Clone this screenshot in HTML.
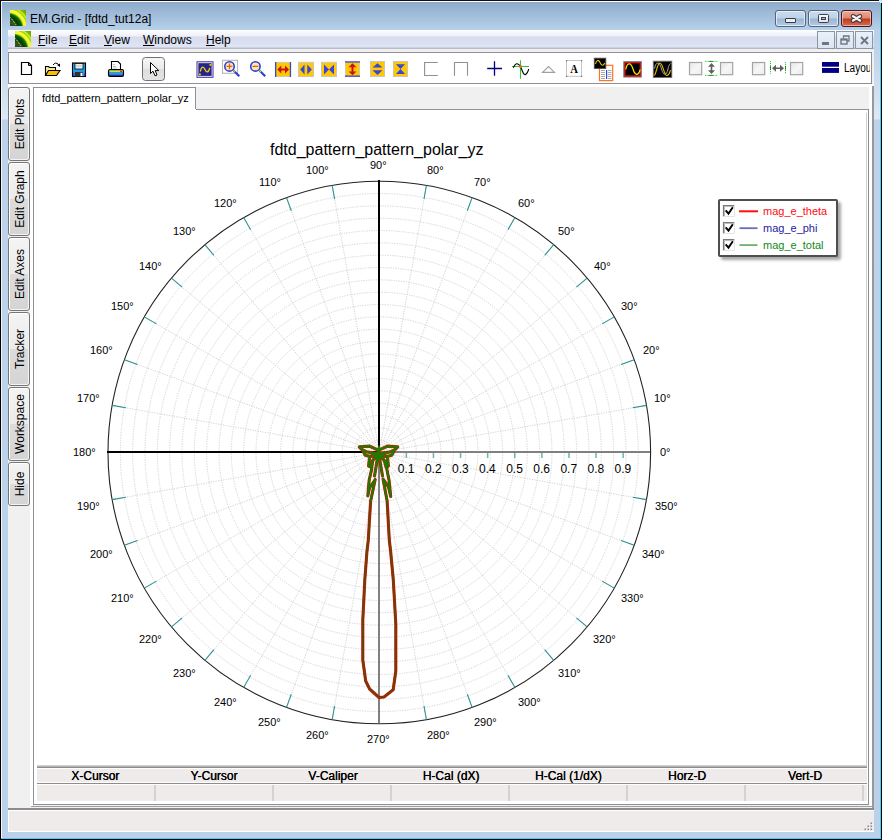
<!DOCTYPE html>
<html><head><meta charset="utf-8">
<style>
*{margin:0;padding:0;box-sizing:border-box}
html,body{width:882px;height:840px;overflow:hidden}
body{position:relative;background:#b9d1ea;font-family:"Liberation Sans",sans-serif;color:#000}
.a{position:absolute}
.t{position:absolute;white-space:nowrap;line-height:1}
</style></head><body>
<!-- frame -->
<div class="a" style="left:0;top:0;width:882px;height:840px;background:linear-gradient(#b9d1ea 0,#b9d1ea 40px,#dce8f5 119px,#bcd3eb 120px,#b9d1ea 100%)"></div>
<div class="a" style="left:0;top:0;width:2px;height:840px;background:#000"></div>
<div class="a" style="left:1px;top:1px;width:1px;height:838px;background:#f4f8fc"></div>
<div class="a" style="left:881px;top:2px;width:1px;height:838px;background:#000"></div>
<div class="a" style="left:878px;top:0;width:4px;height:3px;background:#e8eef4;border-radius:0 3px 0 0"></div>
<div class="a" style="left:880px;top:3px;width:1px;height:836px;background:#3ad4f8"></div>
<div class="a" style="left:0;top:839px;width:882px;height:1px;background:#000"></div>
<div class="a" style="left:1px;top:838px;width:880px;height:1px;background:#3ad4f8"></div>
<div class="a" style="left:0;top:0;width:879px;height:1px;background:#111;border-radius:0 0 0 0"></div>
<div class="a" style="left:2px;top:1px;width:877px;height:1px;background:#fbfdff"></div>
<div class="a" style="left:2px;top:2px;width:878px;height:28px;background:linear-gradient(#8eabcb,#b6d1ea)"></div>
<!-- title -->
<!--TICON-->
<svg class="a" style="left:10px;top:10px" width="16" height="16" viewBox="0 0 16 16">
<defs><radialGradient id="rga" cx="-2" cy="18" r="24" gradientUnits="userSpaceOnUse">
<stop offset="0" stop-color="#4a6a10"/><stop offset="0.3" stop-color="#2e5a0a"/><stop offset="0.45" stop-color="#053c02"/><stop offset="0.58" stop-color="#0a6a08"/><stop offset="0.66" stop-color="#f0f820"/><stop offset="0.76" stop-color="#f8fa40"/><stop offset="0.8" stop-color="#98d010"/><stop offset="0.86" stop-color="#d0ee28"/><stop offset="0.92" stop-color="#80b800"/><stop offset="1" stop-color="#70a800"/></radialGradient></defs>
<rect width="16" height="16" fill="url(#rga)"/>
<path d="M0.5,7.5 L6.5,15.5" stroke="#f0f0f0" stroke-width="1" stroke-dasharray="1 1"/>
<rect x="0" y="14" width="3" height="2" fill="#404040"/>
</svg>
<!--/TICON-->
<div class="t" style="left:30px;top:13px;font-size:12px;color:#000">EM.Grid - [fdtd_tut12a]</div>
<!-- window buttons -->
<!--WBTNS-->
<div class="a" style="left:775px;top:10px;width:31px;height:17px;border:1px solid #55647a;border-radius:3px;background:linear-gradient(#cadcef 0,#bdd2e8 7px,#9ab6d3 8px,#b3cbe4 15px);box-shadow:inset 0 0 0 1px rgba(240,246,252,.75)"></div>
<div class="a" style="left:785px;top:18px;width:11px;height:5px;border:1px solid #333a48;border-radius:1px;background:#efefef"></div>
<div class="a" style="left:808px;top:10px;width:31px;height:17px;border:1px solid #55647a;border-radius:3px;background:linear-gradient(#cadcef 0,#bdd2e8 7px,#9ab6d3 8px,#b3cbe4 15px);box-shadow:inset 0 0 0 1px rgba(240,246,252,.75)"></div>
<div class="a" style="left:818px;top:14px;width:11px;height:9px;border:1px solid #3a4050;border-radius:1.5px;background:linear-gradient(#fafafa,#e4e4e4)"></div>
<div class="a" style="left:821px;top:17px;width:5px;height:3px;border:1px solid #3a4050;background:#a8bcd4"></div>
<div class="a" style="left:841px;top:10px;width:31px;height:17px;border:1px solid #4a1222;border-radius:3px;background:linear-gradient(#eba996 0,#de8a72 7px,#c03c1c 8px,#d46c52 15px);box-shadow:inset 0 0 0 1px rgba(250,220,210,.6)"></div>
<svg class="a" style="left:850px;top:13px" width="13" height="11" viewBox="0 0 13 11"><path d="M3,3.2 L10,7.6 M10,3.2 L3,7.6" stroke="#3b3040" stroke-width="4.4" stroke-linecap="round"/><path d="M3,3.2 L10,7.6 M10,3.2 L3,7.6" stroke="#f2f2f2" stroke-width="2.4" stroke-linecap="round"/></svg>

<!--/WBTNS-->
<!-- menu bar -->
<div class="a" style="left:8px;top:30px;width:866px;height:19px;background:linear-gradient(#ffffff 0,#eef0f8 6px,#d6dcee 7px,#e0e5f4 17px,#b8bccc 18px)"></div>
<!--MICON-->
<svg class="a" style="left:15px;top:31px" width="16" height="16" viewBox="0 0 16 16">
<defs><radialGradient id="rgb" cx="-2" cy="18" r="24" gradientUnits="userSpaceOnUse">
<stop offset="0" stop-color="#4a6a10"/><stop offset="0.3" stop-color="#2e5a0a"/><stop offset="0.45" stop-color="#053c02"/><stop offset="0.58" stop-color="#0a6a08"/><stop offset="0.66" stop-color="#f0f820"/><stop offset="0.76" stop-color="#f8fa40"/><stop offset="0.8" stop-color="#98d010"/><stop offset="0.86" stop-color="#d0ee28"/><stop offset="0.92" stop-color="#80b800"/><stop offset="1" stop-color="#70a800"/></radialGradient></defs>
<rect width="16" height="16" fill="url(#rgb)"/>
<path d="M0.5,7.5 L6.5,15.5" stroke="#f0f0f0" stroke-width="1" stroke-dasharray="1 1"/>
<rect x="0" y="14" width="3" height="2" fill="#404040"/>
</svg>
<!--/MICON-->
<div class="t" style="left:38px;top:34px;font-size:12px"><u>F</u>ile</div>
<div class="t" style="left:69px;top:34px;font-size:12px"><u>E</u>dit</div>
<div class="t" style="left:104px;top:34px;font-size:12px"><u>V</u>iew</div>
<div class="t" style="left:143px;top:34px;font-size:12px"><u>W</u>indows</div>
<div class="t" style="left:206px;top:34px;font-size:12px"><u>H</u>elp</div>
<!--MDI-->
<div class="a" style="left:817px;top:31px;width:18px;height:18px;border:1px solid #8c96a2;background:linear-gradient(#e9f1fa,#dbe6f3)"></div>
<div class="a" style="left:822px;top:42px;width:7px;height:3px;background:#6e7680"></div>
<div class="a" style="left:836px;top:31px;width:18px;height:18px;border:1px solid #8c96a2;background:linear-gradient(#e9f1fa,#dbe6f3)"></div>
<svg class="a" style="left:840px;top:35px" width="10" height="10" viewBox="0 0 10 10"><path d="M3.5,3 V1 H9 V6 H7" fill="none" stroke="#6e7680" stroke-width="1.3"/><rect x="1" y="4" width="6" height="5" fill="none" stroke="#6e7680" stroke-width="1.4"/><rect x="1" y="4" width="6" height="1.6" fill="#6e7680"/></svg>
<div class="a" style="left:855px;top:31px;width:18px;height:18px;border:1px solid #8c96a2;background:linear-gradient(#e9f1fa,#dbe6f3)"></div>
<svg class="a" style="left:860px;top:36px" width="9" height="9" viewBox="0 0 9 9"><path d="M1,1 L8,8 M8,1 L1,8" stroke="#6e7680" stroke-width="1.9"/></svg>

<!--/MDI-->
<!-- below menu grey -->
<div class="a" style="left:8px;top:49px;width:866px;height:760px;background:#f0f0f0"></div>
<!-- toolbar -->
<div class="a" style="left:8px;top:52px;width:864px;height:32px;background:#fff;border:1px solid #8e8f98"></div>
<div class="a" style="left:8px;top:84px;width:866px;height:3px;background:#fff"></div>
<!--TOOLS-->
<svg class="a" style="left:0;top:50px" width="882" height="36" viewBox="0 50 882 36">
<!-- new doc -->
<path d="M21.5,62.5 H28.5 L31.5,65.5 V74.5 H21.5 Z" fill="#fff" stroke="#000" stroke-width="1.2"/>
<path d="M28.5,62.5 V65.5 H31.5" fill="none" stroke="#000" stroke-width="1"/>
<!-- open folder -->
<path d="M45.5,75.5 V66.5 H48.5 L49.5,67.5 H55.5 V70.5" fill="#f8e8a0" stroke="#000" stroke-width="1.1"/>
<path d="M45.5,75.5 L48.5,70.5 H60 L56.5,75.5 Z" fill="#f8c000" stroke="#000" stroke-width="1.1"/>
<path d="M53,65 Q55.5,61.5 58.5,64.5" fill="none" stroke="#000" stroke-width="1"/>
<path d="M57,65 L60,67 L60,63.5 Z" fill="#000"/>
<!-- save -->
<rect x="72.5" y="63" width="13" height="13.5" fill="#18a0ee" stroke="#000" stroke-width="1.1"/>
<rect x="75" y="63.5" width="8" height="5.5" fill="#fff" stroke="#000" stroke-width="0.8"/>
<rect x="76" y="64.5" width="6" height="3" fill="#d8d8d8"/>
<rect x="75" y="72" width="8" height="4.5" fill="#303030"/>
<rect x="80.5" y="72.8" width="2" height="3.2" fill="#fff"/>
<rect x="73" y="73" width="1.5" height="3" fill="#4040c8"/><rect x="84" y="73" width="1.2" height="3" fill="#4040c8"/>
<!-- printer -->
<path d="M111.5,61.5 H118 L120.5,64 V69.5 H111.5 Z" fill="#fff" stroke="#000" stroke-width="1.1"/>
<path d="M113,64.5 H115 M113,66.5 H116 M113,68 H117" stroke="#999" stroke-width="0.6"/>
<rect x="108.5" y="69.5" width="15" height="7" rx="1.5" fill="#2030b0" stroke="#000" stroke-width="1.1"/>
<rect x="109.3" y="70.3" width="13.4" height="2" fill="#c8e828"/>
<rect x="109.3" y="72.3" width="13.4" height="1.5" fill="#20b8e8"/>
<rect x="109.3" y="73.8" width="13.4" height="1" fill="#6080e0"/>
<rect x="120" y="70.5" width="2" height="1.6" fill="#e83020"/>
<!-- pointer button -->
<rect x="142.5" y="57.5" width="22" height="23" rx="3" fill="url(#gbtn)" stroke="#707070" stroke-width="1"/>
<defs><linearGradient id="gbtn" x1="0" y1="0" x2="0" y2="1"><stop offset="0" stop-color="#f6f6f6"/><stop offset="0.5" stop-color="#eaeaea"/><stop offset="0.52" stop-color="#dedede"/><stop offset="1" stop-color="#e4e4e4"/></linearGradient>
<linearGradient id="gbox" x1="0" y1="0" x2="1" y2="1"><stop offset="0" stop-color="#e6e6e6"/><stop offset="0.5" stop-color="#f6f6f6"/><stop offset="1" stop-color="#ececec"/></linearGradient></defs>
<path d="M150.5,62.5 V73.5 L153,71.2 L155,75.8 L157,75 L155.2,70.6 L158.8,70.6 Z" fill="#fff" stroke="#000" stroke-width="1" stroke-linejoin="round"/>
<!-- scope blue -->
<rect x="196.5" y="61.3" width="17" height="16.5" fill="#2a2ad8"/>
<rect x="197.4" y="62.2" width="15.2" height="14.7" fill="#f0e2b4"/>
<rect x="198.4" y="63.2" width="13.2" height="12.7" fill="#24248c"/>
<path d="M200.3,71.5 C201.5,66 203.5,66 205,69.5 C206.5,73 208.5,73 209.7,67.8" fill="none" stroke="#f2d200" stroke-width="1.3"/>
<rect x="209.5" y="64" width="1.8" height="1.8" fill="#f2d200"/><rect x="199" y="73.5" width="1.8" height="1.8" fill="#f2d200"/>
<!-- zoom in -->
<rect x="222.5" y="60.3" width="15" height="13" fill="none" stroke="#b8b8b8" stroke-width="1.1"/>
<line x1="233.5" y1="70.5" x2="239.3" y2="76.3" stroke="#3040d0" stroke-width="2.2"/>
<line x1="233.5" y1="70.5" x2="235" y2="72" stroke="#a0e020" stroke-width="1.5"/>
<circle cx="229.5" cy="66.4" r="4.7" fill="#f6e8b8" stroke="#3040d0" stroke-width="1.6"/>
<path d="M226.6,66.4 H232.4 M229.5,63.5 V69.3" stroke="#f05a10" stroke-width="1.2"/>
<!-- zoom out -->
<line x1="259.5" y1="70.5" x2="265.2" y2="76.3" stroke="#3040d0" stroke-width="2.2"/>
<line x1="259.5" y1="70.5" x2="261" y2="72" stroke="#a0e020" stroke-width="1.5"/>
<circle cx="255.4" cy="66.4" r="4.7" fill="#f6e8b8" stroke="#3040d0" stroke-width="1.6"/>
<path d="M252.5,66.4 H258.3" stroke="#f05a10" stroke-width="1.3"/>
<!-- h arrow -->
<rect x="275.5" y="62.3" width="15" height="14.3" fill="#ffc800" stroke="#c4c4c4" stroke-width="0.8"/>
<rect x="275" y="62" width="1.3" height="15" fill="#3a46d8"/><rect x="289.8" y="62" width="1.3" height="15" fill="#3a46d8"/>
<path d="M277.3,69.5 L281.3,65.5 V68.5 H285 V65.5 L289,69.5 L285,73.5 V70.5 H281.3 V73.5 Z" fill="#c81414"/>
<!-- lr triangles -->
<rect x="298.5" y="62.3" width="15" height="14.3" fill="#ffc800" stroke="#c4c4c4" stroke-width="0.9"/>
<path d="M300.2,69.5 L304.5,64.5 V74.5 Z M311.8,69.5 L307.3,64.5 V74.5 Z" fill="#3a46d8"/>
<!-- bowtie -->
<rect x="321.5" y="62.3" width="15" height="14.3" fill="#ffc800" stroke="#c4c4c4" stroke-width="0.9"/>
<path d="M324,64.5 L329,69.5 L324,74.5 Z M334,64.5 L329,69.5 L334,74.5 Z" fill="#3a46d8"/>
<!-- v arrow -->
<rect x="345.5" y="62" width="14" height="14.5" fill="#ffc800" stroke="#c4c4c4" stroke-width="0.8"/>
<rect x="345" y="61.3" width="15" height="1.3" fill="#3a46d8"/><rect x="345" y="75.5" width="15" height="1.3" fill="#3a46d8"/>
<path d="M352.5,63.3 L356.5,67.3 H353.5 V71.5 H356.5 L352.5,75.3 L348.5,71.5 H351.5 V67.3 H348.5 Z" fill="#c81414"/>
<!-- ud triangles -->
<rect x="370.5" y="61.5" width="14" height="15" fill="#ffc800" stroke="#c4c4c4" stroke-width="0.9"/>
<path d="M377.5,63.2 L382.5,67.6 H372.5 Z M377.5,75 L382.5,70.2 H372.5 Z" fill="#3a46d8"/>
<!-- hourglass -->
<rect x="393.5" y="61.5" width="14" height="15" fill="#ffc800" stroke="#c4c4c4" stroke-width="0.9"/>
<path d="M396,64.2 H405 L400.5,69 Z M396,74 H405 L400.5,69 Z" fill="#3a46d8"/>
<!-- brackets -->
<path d="M437.8,62.5 H424.6 V75.5 H437.8" fill="none" stroke="#909090" stroke-width="1.1"/>
<path d="M454.5,75.8 V62.5 H467.5 V75.8" fill="none" stroke="#909090" stroke-width="1.1"/>
<!-- plus -->
<path d="M487.2,68.5 H502 M494.5,61.2 V75.8" stroke="#000080" stroke-width="1.3"/>
<!-- cursor sine -->
<path d="M520.5,60.2 V78.8 M512,66.5 H529" stroke="#30c040" stroke-width="1.1"/>
<path d="M513.3,67.8 C515,63.5 517.5,61.8 520.5,66.5 C522,70 523.5,75.5 525.5,74.5 C527.5,73.5 528.5,70 528.8,69" fill="none" stroke="#000" stroke-width="1.1"/>
<rect x="519.3" y="65.3" width="2.6" height="2.6" fill="#f07020"/>
<!-- triangle -->
<path d="M542.5,72.4 L548.5,66.5 L554.5,72.4 Z" fill="none" stroke="#a0a0a0" stroke-width="1.1"/>
<!-- A box -->
<rect x="566.5" y="60.5" width="15" height="15.8" fill="#fff" stroke="#c4c4c4" stroke-width="1"/><g fill="#707070"><rect x="566" y="60" width="1.2" height="1.2"/><rect x="581" y="60" width="1.2" height="1.2"/><rect x="566" y="75.8" width="1.2" height="1.2"/><rect x="581" y="75.8" width="1.2" height="1.2"/></g>
<text x="574" y="73.3" font-family="Liberation Serif" font-weight="bold" font-size="12.5" text-anchor="middle" fill="#000" transform="translate(574 0) scale(0.85 1) translate(-574 0)">A</text>
<!-- scope+doc -->
<rect x="599.5" y="65.3" width="13.2" height="15.3" fill="#fff" stroke="#ff7420" stroke-width="1.2"/>
<path d="M601,70.5 H605 M601,72.5 H605 M601,74.5 H605 M601,76.5 H605 M601,78.5 H605 M608,70.5 H611.5 M608,72.5 H611.5 M608,74.5 H611.5 M608,76.5 H611.5 M608,78.5 H611.5" stroke="#a8a8a8" stroke-width="1"/>
<rect x="606" y="70" width="1.2" height="9" fill="#3848d8"/>
<rect x="594.3" y="58.2" width="11.5" height="10.3" fill="#000" stroke="#505050" stroke-width="0.9"/>
<path d="M595.5,64 C596.5,59.5 598.5,59.5 600,62.5 C601.5,66 603.5,66 604.7,63" fill="none" stroke="#f0c800" stroke-width="1.1"/>
<!-- red scope -->
<rect x="623.3" y="61.2" width="18.5" height="16.3" fill="#6c6c6c"/>
<rect x="624.2" y="62.1" width="16.7" height="14.5" fill="#e01010"/>
<rect x="625.5" y="63.4" width="14.1" height="11.9" fill="#000"/>
<path d="M625.8,69.5 C627,62 631,62 633,69 C635,76 638.5,76 640.2,69.5" fill="none" stroke="#f8e800" stroke-width="1.2"/>
<!-- black scope 2 waves -->
<rect x="653.3" y="61.2" width="18.5" height="16.3" fill="#000" stroke="#707070" stroke-width="0.9"/>
<path d="M654.5,68.5 C656,61 659.5,61 661.5,69 C663.5,76 666.5,76 668,69 C669,64.5 670,63.5 671,63.5" fill="none" stroke="#a8a8a8" stroke-width="1"/>
<path d="M654.5,75.5 C656.5,72 657.5,63 660,63 C663,63 664,76 667,75.5 C669.5,75 670,71 670.5,70" fill="none" stroke="#f0c000" stroke-width="1.1"/>
<!-- grey boxes -->
<rect x="689.5" y="62.5" width="12.2" height="12.2" fill="url(#gbox)" stroke="#a4a4a4" stroke-width="1.2"/>
<rect x="720.5" y="62.5" width="12.2" height="12.2" fill="url(#gbox)" stroke="#a4a4a4" stroke-width="1.2"/>
<rect x="752.5" y="62.5" width="12.2" height="12.2" fill="url(#gbox)" stroke="#a4a4a4" stroke-width="1.2"/>
<rect x="790.5" y="62.5" width="12.2" height="12.2" fill="url(#gbox)" stroke="#a4a4a4" stroke-width="1.2"/>
<!-- v arrow green -->
<path d="M705,61.4 H718 M705,75.4 H718" stroke="#20e020" stroke-width="1" stroke-dasharray="1 0.6"/>
<path d="M709.5,61.4 H713.5 M709.5,75.4 H713.5" stroke="#000" stroke-width="1" stroke-dasharray="1 1"/>
<path d="M711.5,63 L715,66.8 H712.3 V70.2 H715 L711.5,74 L708,70.2 H710.7 V66.8 H708 Z" fill="#606060"/>
<!-- h arrow green -->
<path d="M770.5,61 V73.7 M785.5,62 V73.7" stroke="#20e020" stroke-width="1" stroke-dasharray="1.2 0.8"/>
<path d="M770.5,66.5 V70.5 M785.5,66.5 V70.5" stroke="#000" stroke-width="1" stroke-dasharray="1 1"/>
<path d="M772,68.3 L776,64.8 V67.5 H780 V64.8 L784,68.3 L780,71.8 V69.1 H776 V71.8 Z" fill="#606060"/>
<!-- layout -->
<rect x="822" y="62" width="17" height="4.7" fill="#000080"/>
<rect x="822" y="68" width="17" height="4.9" fill="#000080"/>
</svg>
<div class="a" style="left:843px;top:60px;width:27px;height:16px;overflow:hidden"><div class="t" style="left:1px;top:2px;font-size:12px;transform:scaleX(0.84);transform-origin:0 0">Layout</div></div>

<!--/TOOLS-->
<!-- right side strip -->
<div class="a" style="left:869px;top:87px;width:4px;height:720px;background:#fff"></div>
<div class="a" style="left:872px;top:86px;width:2px;height:723px;background:#999"></div>
<!-- left tabs -->
<div class="a" style="left:30px;top:87px;width:3px;height:720px;background:#fff"></div>
<!--LTABS-->
<div class="a" style="left:8px;top:87px;width:22px;height:74px;border:1px solid #767676;border-radius:3px;background:linear-gradient(#f4f4f4 0,#ebebeb 50%,#dcdcdc 50%,#d4d4d4 100%);box-shadow:inset 1px 1px 0 #fff,inset -1px -1px 0 #f4f4f4"></div>
<div class="a" style="left:8px;top:162px;width:22px;height:74px;border:1px solid #767676;border-radius:3px;background:linear-gradient(#f4f4f4 0,#ebebeb 50%,#dcdcdc 50%,#d4d4d4 100%);box-shadow:inset 1px 1px 0 #fff,inset -1px -1px 0 #f4f4f4"></div>
<div class="a" style="left:8px;top:237px;width:22px;height:74px;border:1px solid #767676;border-radius:3px;background:linear-gradient(#f4f4f4 0,#ebebeb 50%,#dcdcdc 50%,#d4d4d4 100%);box-shadow:inset 1px 1px 0 #fff,inset -1px -1px 0 #f4f4f4"></div>
<div class="a" style="left:8px;top:312px;width:22px;height:74px;border:1px solid #767676;border-radius:3px;background:linear-gradient(#f4f4f4 0,#ebebeb 50%,#dcdcdc 50%,#d4d4d4 100%);box-shadow:inset 1px 1px 0 #fff,inset -1px -1px 0 #f4f4f4"></div>
<div class="a" style="left:8px;top:387px;width:22px;height:74px;border:1px solid #767676;border-radius:3px;background:linear-gradient(#f4f4f4 0,#ebebeb 50%,#dcdcdc 50%,#d4d4d4 100%);box-shadow:inset 1px 1px 0 #fff,inset -1px -1px 0 #f4f4f4"></div>
<div class="a" style="left:8px;top:462px;width:22px;height:44px;border:1px solid #767676;border-radius:3px;background:linear-gradient(#f4f4f4 0,#ebebeb 50%,#dcdcdc 50%,#d4d4d4 100%);box-shadow:inset 1px 1px 0 #fff,inset -1px -1px 0 #f4f4f4"></div>
<svg class="a" style="left:0;top:80px" width="34" height="440" viewBox="0 80 34 440">
<text transform="translate(23.8,124.0) rotate(-90)" text-anchor="middle" font-family="Liberation Sans" font-size="12" fill="#000">Edit Plots</text>
<text transform="translate(23.8,199.0) rotate(-90)" text-anchor="middle" font-family="Liberation Sans" font-size="12" fill="#000">Edit Graph</text>
<text transform="translate(23.8,274.0) rotate(-90)" text-anchor="middle" font-family="Liberation Sans" font-size="12" fill="#000">Edit Axes</text>
<text transform="translate(23.8,349.0) rotate(-90)" text-anchor="middle" font-family="Liberation Sans" font-size="12" fill="#000">Tracker</text>
<text transform="translate(23.8,424.0) rotate(-90)" text-anchor="middle" font-family="Liberation Sans" font-size="12" fill="#000">Workspace</text>
<text transform="translate(23.8,484.0) rotate(-90)" text-anchor="middle" font-family="Liberation Sans" font-size="12" fill="#000">Hide</text>
</svg>
<!--/LTABS-->
<!-- doc tab -->
<div class="a" style="left:33px;top:87px;width:163px;height:23px;background:#fff;border:1px solid #8e8f98;border-bottom:none"></div>
<div class="t" style="left:42px;top:93px;font-size:11px">fdtd_pattern_pattern_polar_yz</div>
<!-- content -->
<div class="a" style="left:33px;top:109px;width:836px;height:696px;background:#fff;border:1px solid #8e8f98;border-top:none"></div>
<div class="a" style="left:196px;top:109px;width:673px;height:1px;background:#8e8f98"></div>
<!--PLOT-->
<svg class="a" style="left:0;top:0" width="882" height="840" viewBox="0 0 882 840">
<rect x="866" y="113" width="1" height="652" fill="#d0d0d0"/>
<rect x="37" y="765" width="830" height="1" fill="#d0d0d0"/>
<g fill="none" stroke="#d2d2d2" stroke-width="1" stroke-dasharray="1.2 1.3">
<circle cx="379.3" cy="452.5" r="12.33"/>
<circle cx="379.3" cy="452.5" r="24.66"/>
<circle cx="379.3" cy="452.5" r="37.00"/>
<circle cx="379.3" cy="452.5" r="49.33"/>
<circle cx="379.3" cy="452.5" r="61.66"/>
<circle cx="379.3" cy="452.5" r="73.99"/>
<circle cx="379.3" cy="452.5" r="86.32"/>
<circle cx="379.3" cy="452.5" r="98.65"/>
<circle cx="379.3" cy="452.5" r="110.99"/>
<circle cx="379.3" cy="452.5" r="123.32"/>
<circle cx="379.3" cy="452.5" r="135.65"/>
<circle cx="379.3" cy="452.5" r="147.98"/>
<circle cx="379.3" cy="452.5" r="160.31"/>
<circle cx="379.3" cy="452.5" r="172.65"/>
<circle cx="379.3" cy="452.5" r="184.98"/>
<circle cx="379.3" cy="452.5" r="197.31"/>
<circle cx="379.3" cy="452.5" r="209.64"/>
<circle cx="379.3" cy="452.5" r="221.97"/>
<circle cx="379.3" cy="452.5" r="234.30"/>
<circle cx="379.3" cy="452.5" r="246.64"/>
<circle cx="379.3" cy="452.5" r="258.97"/>
<line x1="379.3" y1="452.5" x2="646.48" y2="405.39"/>
<line x1="379.3" y1="452.5" x2="634.24" y2="359.71"/>
<line x1="379.3" y1="452.5" x2="614.25" y2="316.85"/>
<line x1="379.3" y1="452.5" x2="587.13" y2="278.11"/>
<line x1="379.3" y1="452.5" x2="553.69" y2="244.67"/>
<line x1="379.3" y1="452.5" x2="514.95" y2="217.55"/>
<line x1="379.3" y1="452.5" x2="472.09" y2="197.56"/>
<line x1="379.3" y1="452.5" x2="426.41" y2="185.32"/>
<line x1="379.3" y1="452.5" x2="332.19" y2="185.32"/>
<line x1="379.3" y1="452.5" x2="286.51" y2="197.56"/>
<line x1="379.3" y1="452.5" x2="243.65" y2="217.55"/>
<line x1="379.3" y1="452.5" x2="204.91" y2="244.67"/>
<line x1="379.3" y1="452.5" x2="171.47" y2="278.11"/>
<line x1="379.3" y1="452.5" x2="144.35" y2="316.85"/>
<line x1="379.3" y1="452.5" x2="124.36" y2="359.71"/>
<line x1="379.3" y1="452.5" x2="112.12" y2="405.39"/>
<line x1="379.3" y1="452.5" x2="112.12" y2="499.61"/>
<line x1="379.3" y1="452.5" x2="124.36" y2="545.29"/>
<line x1="379.3" y1="452.5" x2="144.35" y2="588.15"/>
<line x1="379.3" y1="452.5" x2="171.47" y2="626.89"/>
<line x1="379.3" y1="452.5" x2="204.91" y2="660.33"/>
<line x1="379.3" y1="452.5" x2="243.65" y2="687.45"/>
<line x1="379.3" y1="452.5" x2="286.51" y2="707.44"/>
<line x1="379.3" y1="452.5" x2="332.19" y2="719.68"/>
<line x1="379.3" y1="452.5" x2="426.41" y2="719.68"/>
<line x1="379.3" y1="452.5" x2="472.09" y2="707.44"/>
<line x1="379.3" y1="452.5" x2="514.95" y2="687.45"/>
<line x1="379.3" y1="452.5" x2="553.69" y2="660.33"/>
<line x1="379.3" y1="452.5" x2="587.13" y2="626.89"/>
<line x1="379.3" y1="452.5" x2="614.25" y2="588.15"/>
<line x1="379.3" y1="452.5" x2="634.24" y2="545.29"/>
<line x1="379.3" y1="452.5" x2="646.48" y2="499.61"/>
</g>
<circle cx="379.3" cy="452.5" r="271.3" fill="none" stroke="#222" stroke-width="1.1"/>
<g stroke="#2a9090" stroke-width="1.05">
<line x1="646.48" y1="405.39" x2="632.69" y2="407.82"/>
<line x1="634.24" y1="359.71" x2="621.08" y2="364.50"/>
<line x1="614.25" y1="316.85" x2="602.13" y2="323.85"/>
<line x1="587.13" y1="278.11" x2="576.40" y2="287.11"/>
<line x1="553.69" y1="244.67" x2="544.69" y2="255.40"/>
<line x1="514.95" y1="217.55" x2="507.95" y2="229.67"/>
<line x1="472.09" y1="197.56" x2="467.30" y2="210.72"/>
<line x1="426.41" y1="185.32" x2="423.98" y2="199.11"/>
<line x1="332.19" y1="185.32" x2="334.62" y2="199.11"/>
<line x1="286.51" y1="197.56" x2="291.30" y2="210.72"/>
<line x1="243.65" y1="217.55" x2="250.65" y2="229.67"/>
<line x1="204.91" y1="244.67" x2="213.91" y2="255.40"/>
<line x1="171.47" y1="278.11" x2="182.20" y2="287.11"/>
<line x1="144.35" y1="316.85" x2="156.47" y2="323.85"/>
<line x1="124.36" y1="359.71" x2="137.52" y2="364.50"/>
<line x1="112.12" y1="405.39" x2="125.91" y2="407.82"/>
<line x1="112.12" y1="499.61" x2="125.91" y2="497.18"/>
<line x1="124.36" y1="545.29" x2="137.52" y2="540.50"/>
<line x1="144.35" y1="588.15" x2="156.47" y2="581.15"/>
<line x1="171.47" y1="626.89" x2="182.20" y2="617.89"/>
<line x1="204.91" y1="660.33" x2="213.91" y2="649.60"/>
<line x1="243.65" y1="687.45" x2="250.65" y2="675.33"/>
<line x1="286.51" y1="707.44" x2="291.30" y2="694.28"/>
<line x1="332.19" y1="719.68" x2="334.62" y2="705.89"/>
<line x1="426.41" y1="719.68" x2="423.98" y2="705.89"/>
<line x1="472.09" y1="707.44" x2="467.30" y2="694.28"/>
<line x1="514.95" y1="687.45" x2="507.95" y2="675.33"/>
<line x1="553.69" y1="660.33" x2="544.69" y2="649.60"/>
<line x1="587.13" y1="626.89" x2="576.40" y2="617.89"/>
<line x1="614.25" y1="588.15" x2="602.13" y2="581.15"/>
<line x1="634.24" y1="545.29" x2="621.08" y2="540.50"/>
<line x1="646.48" y1="499.61" x2="632.69" y2="497.18"/>
</g>
<rect x="378.0" y="180.0" width="2" height="272.0" fill="#000"/>
<rect x="107.0" y="451.0" width="272.0" height="2" fill="#000"/>
<rect x="378.0" y="452.0" width="2" height="271.0" fill="#808080"/>
<rect x="379.0" y="451.0" width="271.0" height="2" fill="#808080"/>
<rect x="405.60" y="453.0" width="1.5" height="5" fill="#6ab4b4"/>
<rect x="432.70" y="453.0" width="1.5" height="5" fill="#6ab4b4"/>
<rect x="459.80" y="453.0" width="1.5" height="5" fill="#6ab4b4"/>
<rect x="486.90" y="453.0" width="1.5" height="5" fill="#6ab4b4"/>
<rect x="514.00" y="453.0" width="1.5" height="5" fill="#6ab4b4"/>
<rect x="541.10" y="453.0" width="1.5" height="5" fill="#6ab4b4"/>
<rect x="568.20" y="453.0" width="1.5" height="5" fill="#6ab4b4"/>
<rect x="595.30" y="453.0" width="1.5" height="5" fill="#6ab4b4"/>
<rect x="622.40" y="453.0" width="1.5" height="5" fill="#6ab4b4"/>
</svg>
<!--/PLOT-->
<!--CURVES-->
<svg class="a" style="left:0;top:0" width="882" height="840" viewBox="0 0 882 840">
<g fill="none" stroke-linejoin="round" stroke-linecap="round">
<path d="M359.3,446.8 L369.7,446.2 L377.7,449.9 L379.0,452.0 M359.3,447.0 L362.4,450.0 L366.5,451.8 L377.0,453.5 M362.4,450.0 L365.2,455.3 L369.7,456.4 L377.0,454.5 M369.7,456.4 L368.6,466.0 L370.9,467.2 L372.5,461.0 L377.0,454.5 M378.0,455.0 L376.2,466.0 L374.5,476.0 M397.7,446.8 L387.3,446.2 L379.3,449.9 L378.0,452.0 M397.7,447.0 L394.6,450.0 L390.5,451.8 L380.0,453.5 M394.6,450.0 L391.8,455.3 L387.3,456.4 L380.0,454.5 M387.3,456.4 L388.4,466.0 L386.1,467.2 L384.5,461.0 L380.0,454.5 M379.0,455.0 L380.8,466.0 L382.5,476.0" stroke="#f01000" stroke-width="3.2"/>
<path d="M372.5,461.0 L371.5,470.0 L369.2,480.0 L367.8,496.0 L369.5,488.0 L375.2,479.5 L370.6,501.3 L368.3,540.0 L366.9,552.0 L364.8,580.0 L362.8,620.0 L362.8,660.0 L365.7,681.0 L369.6,689.0 L379.0,697.5 L384.0,697.0 L393.2,689.7 L395.8,671.0 L395.8,624.0 L393.3,580.0 L390.7,552.0 L389.3,540.0 L387.1,500.7 L383.0,479.0 L388.5,487.0 L390.7,496.5 L389.0,480.0 L387.0,470.0 L386.0,461.0" stroke="#f01000" stroke-width="3.1"/>
<path d="M372.5,461.0 L371.5,470.0 L369.2,480.0 L367.8,496.0 L369.5,488.0 L375.2,479.5 L370.6,501.3 L368.3,540.0 L366.9,552.0 L364.8,580.0 L362.8,620.0 L362.8,660.0 L365.7,681.0 L369.6,689.0 L379.0,697.5 L384.0,697.0 L393.2,689.7 L395.8,671.0 L395.8,624.0 L393.3,580.0 L390.7,552.0 L389.3,540.0 L387.1,500.7 L383.0,479.0 L388.5,487.0 L390.7,496.5 L389.0,480.0 L387.0,470.0 L386.0,461.0" stroke="#70380c" stroke-width="2.2"/>
<path d="M359.3,446.8 L369.7,446.2 L377.7,449.9 L379.0,452.0 M359.3,447.0 L362.4,450.0 L366.5,451.8 L377.0,453.5 M362.4,450.0 L365.2,455.3 L369.7,456.4 L377.0,454.5 M369.7,456.4 L368.6,466.0 L370.9,467.2 L372.5,461.0 L377.0,454.5 M378.0,455.0 L376.2,466.0 L374.5,476.0 M397.7,446.8 L387.3,446.2 L379.3,449.9 L378.0,452.0 M397.7,447.0 L394.6,450.0 L390.5,451.8 L380.0,453.5 M394.6,450.0 L391.8,455.3 L387.3,456.4 L380.0,454.5 M387.3,456.4 L388.4,466.0 L386.1,467.2 L384.5,461.0 L380.0,454.5 M379.0,455.0 L380.8,466.0 L382.5,476.0" stroke="#1e7a00" stroke-width="2.2"/>
<path d="M372.5,461.0 L371.5,470.0 L369.2,480.0 L367.8,496.0 L369.5,488.0 L375.2,479.5 L370.6,501.3 M387.1,500.7 L383.0,479.0 L388.5,487.0 L390.7,496.5 L389.0,480.0 L387.0,470.0 L386.0,461.0" stroke="#1e7a00" stroke-width="1.9"/>
<path d="M370.6,501.3 L368.3,540.0 L366.9,552.0 L364.8,580.0 L362.8,620.0 L362.8,660.0 L365.7,681.0 L369.6,689.0 L379.0,697.5 M384.0,697.0 L393.2,689.7 L395.8,671.0 L395.8,624.0 L393.3,580.0 L390.7,552.0 L389.3,540.0 L387.1,500.7" stroke="#2a8000" stroke-width="0.4" stroke-opacity="0.7"/>
<path d="M379,446.5 V452" stroke="#1e7a00" stroke-width="2.2"/>
</g></svg>
<!--/CURVES-->
<!--LABELS-->
<div class="t" style="left:660px;top:447px;font-size:11px">0°</div>
<div class="t" style="left:654px;top:393px;font-size:11px">10°</div>
<div class="t" style="left:643px;top:345px;font-size:11px">20°</div>
<div class="t" style="left:621px;top:301px;font-size:11px">30°</div>
<div class="t" style="left:594px;top:261px;font-size:11px">40°</div>
<div class="t" style="left:558px;top:226px;font-size:11px">50°</div>
<div class="t" style="left:518px;top:198px;font-size:11px">60°</div>
<div class="t" style="left:474px;top:177px;font-size:11px">70°</div>
<div class="t" style="left:427px;top:165px;font-size:11px">80°</div>
<div class="t" style="left:370px;top:160px;font-size:11px">90°</div>
<div class="t" style="left:306px;top:165px;font-size:11px">100°</div>
<div class="t" style="left:259px;top:177px;font-size:11px">110°</div>
<div class="t" style="left:214px;top:198px;font-size:11px">120°</div>
<div class="t" style="left:173px;top:226px;font-size:11px">130°</div>
<div class="t" style="left:139px;top:261px;font-size:11px">140°</div>
<div class="t" style="left:111px;top:301px;font-size:11px">150°</div>
<div class="t" style="left:90px;top:345px;font-size:11px">160°</div>
<div class="t" style="left:77px;top:393px;font-size:11px">170°</div>
<div class="t" style="left:73px;top:447px;font-size:11px">180°</div>
<div class="t" style="left:77px;top:501px;font-size:11px">190°</div>
<div class="t" style="left:90px;top:549px;font-size:11px">200°</div>
<div class="t" style="left:111px;top:593px;font-size:11px">210°</div>
<div class="t" style="left:139px;top:634px;font-size:11px">220°</div>
<div class="t" style="left:173px;top:668px;font-size:11px">230°</div>
<div class="t" style="left:214px;top:697px;font-size:11px">240°</div>
<div class="t" style="left:258px;top:717px;font-size:11px">250°</div>
<div class="t" style="left:306px;top:730px;font-size:11px">260°</div>
<div class="t" style="left:367px;top:734px;font-size:11px">270°</div>
<div class="t" style="left:427px;top:730px;font-size:11px">280°</div>
<div class="t" style="left:474px;top:717px;font-size:11px">290°</div>
<div class="t" style="left:518px;top:697px;font-size:11px">300°</div>
<div class="t" style="left:558px;top:668px;font-size:11px">310°</div>
<div class="t" style="left:593px;top:634px;font-size:11px">320°</div>
<div class="t" style="left:621px;top:593px;font-size:11px">330°</div>
<div class="t" style="left:642px;top:549px;font-size:11px">340°</div>
<div class="t" style="left:655px;top:501px;font-size:11px">350°</div>
<div class="t" style="left:397.8px;top:463px;font-size:12px">0.1</div>
<div class="t" style="left:424.9px;top:463px;font-size:12px">0.2</div>
<div class="t" style="left:452.0px;top:463px;font-size:12px">0.3</div>
<div class="t" style="left:479.1px;top:463px;font-size:12px">0.4</div>
<div class="t" style="left:506.2px;top:463px;font-size:12px">0.5</div>
<div class="t" style="left:533.3px;top:463px;font-size:12px">0.6</div>
<div class="t" style="left:560.4px;top:463px;font-size:12px">0.7</div>
<div class="t" style="left:587.5px;top:463px;font-size:12px">0.8</div>
<div class="t" style="left:614.6px;top:463px;font-size:12px">0.9</div>
<div class="t" style="left:270px;top:142px;font-size:16px">fdtd_pattern_pattern_polar_yz</div>
<!--/LABELS-->
<!--LEGEND-->
<div class="a" style="left:718px;top:199px;width:120px;height:58px;background:#fff;border:2px solid #4e4e4e;border-radius:2px;box-shadow:3px 3px 3px rgba(0,0,0,.35)"></div>
<svg class="a" style="left:720px;top:200px" width="116" height="56" viewBox="720 200 116 56">
<g>
<rect x="723" y="205" width="12" height="12" fill="#fff"/><path d="M723.5,216.5 V205.5 H734.5" fill="none" stroke="#7a7a7a" stroke-width="1.2"/><path d="M724.5,216 V206.5 H734" fill="none" stroke="#a8a8a8" stroke-width="0.8"/><path d="M723.5,216.5 H734.5 V205.5" fill="none" stroke="#e4e4e4" stroke-width="1"/>
<rect x="723" y="222" width="12" height="12" fill="#fff"/><path d="M723.5,233.5 V222.5 H734.5" fill="none" stroke="#7a7a7a" stroke-width="1.2"/><path d="M724.5,233 V223.5 H734" fill="none" stroke="#a8a8a8" stroke-width="0.8"/><path d="M723.5,233.5 H734.5 V222.5" fill="none" stroke="#e4e4e4" stroke-width="1"/>
<rect x="723" y="239" width="12" height="12" fill="#fff"/><path d="M723.5,250.5 V239.5 H734.5" fill="none" stroke="#7a7a7a" stroke-width="1.2"/><path d="M724.5,250 V240.5 H734" fill="none" stroke="#a8a8a8" stroke-width="0.8"/><path d="M723.5,250.5 H734.5 V239.5" fill="none" stroke="#e4e4e4" stroke-width="1"/>
</g>
<g fill="none" stroke="#000" stroke-width="1.9" stroke-linecap="square">
<path d="M726.3,211 L728.5,213.6 L732.3,208"/>
<path d="M726.3,228 L728.5,230.6 L732.3,225"/>
<path d="M726.3,245 L728.5,247.6 L732.3,242"/>
</g>
<rect x="739" y="210.3" width="19" height="2" fill="#ff1010"/>
<rect x="739.5" y="227.3" width="18" height="1.8" fill="#6c6cbc"/>
<rect x="739.5" y="244.2" width="18" height="1.8" fill="#6cb46c"/>
</svg>
<div class="t" style="left:763px;top:206px;font-size:11px;color:#ff0a10">mag_e_theta</div>
<div class="t" style="left:763px;top:223px;font-size:11px;color:#2424a0">mag_e_phi</div>
<div class="t" style="left:763px;top:240px;font-size:11px;color:#12881a">mag_e_total</div>

<!--/LEGEND-->
<!-- table -->
<!--TABLE-->
<div class="a" style="left:37px;top:766px;width:830px;height:1px;background:#b4b4b4"></div>
<div class="a" style="left:37px;top:767px;width:830px;height:1px;background:#8c8c8c"></div>
<div class="a" style="left:37px;top:769px;width:830px;height:13px;background:#efebea"></div>
<div class="a" style="left:37px;top:783px;width:830px;height:1px;background:#8c8c8c"></div>
<div class="a" style="left:37px;top:785px;width:830px;height:16px;background:#efebea"></div>
<div class="t" style="left:35.3px;width:120px;text-align:center;top:770px;font-size:12px;font-weight:normal;text-shadow:0.3px 0 0 #000;color:#000">X-Cursor</div>
<div class="t" style="left:154.0px;width:120px;text-align:center;top:770px;font-size:12px;font-weight:normal;text-shadow:0.3px 0 0 #000;color:#000">Y-Cursor</div>
<div class="t" style="left:273.0px;width:120px;text-align:center;top:770px;font-size:12px;font-weight:normal;text-shadow:0.3px 0 0 #000;color:#000">V-Caliper</div>
<div class="t" style="left:391.0px;width:120px;text-align:center;top:770px;font-size:12px;font-weight:normal;text-shadow:0.3px 0 0 #000;color:#000">H-Cal (dX)</div>
<div class="t" style="left:508.3px;width:120px;text-align:center;top:770px;font-size:12px;font-weight:normal;text-shadow:0.3px 0 0 #000;color:#000">H-Cal (1/dX)</div>
<div class="t" style="left:627.0px;width:120px;text-align:center;top:770px;font-size:12px;font-weight:normal;text-shadow:0.3px 0 0 #000;color:#000">Horz-D</div>
<div class="t" style="left:745.0px;width:120px;text-align:center;top:770px;font-size:12px;font-weight:normal;text-shadow:0.3px 0 0 #000;color:#000">Vert-D</div>
<div class="a" style="left:154.4px;top:785px;width:1.5px;height:16px;background:#d2d2d2"></div>
<div class="a" style="left:272.4px;top:785px;width:1.5px;height:16px;background:#d2d2d2"></div>
<div class="a" style="left:390.4px;top:785px;width:1.5px;height:16px;background:#d2d2d2"></div>
<div class="a" style="left:508.3px;top:785px;width:1.5px;height:16px;background:#d2d2d2"></div>
<div class="a" style="left:626.2px;top:785px;width:1.5px;height:16px;background:#d2d2d2"></div>
<div class="a" style="left:744.2px;top:785px;width:1.5px;height:16px;background:#d2d2d2"></div>
<div class="a" style="left:862.1px;top:785px;width:1.5px;height:16px;background:#d2d2d2"></div>
<!--/TABLE-->
<!-- bottom lines -->
<div class="a" style="left:31px;top:806px;width:843px;height:1px;background:#a0a0a0"></div>
<div class="a" style="left:8px;top:808px;width:866px;height:2px;background:#8c8c8c"></div>
<!-- status bar -->
<div class="a" style="left:8px;top:810px;width:866px;height:22px;background:#efebea;border:1px solid #fff;border-right:none"></div>
<!--STATUS-->
<svg class="a" style="left:860px;top:818px" width="14" height="14" viewBox="860 818 14 14">
<g fill="#fff"><rect x="871" y="823" width="2" height="2"/><rect x="868" y="826" width="2" height="2"/><rect x="871" y="826" width="2" height="2"/><rect x="865" y="829" width="2" height="2"/><rect x="868" y="829" width="2" height="2"/><rect x="871" y="829" width="2" height="2"/></g>
<g fill="#8a8a8a"><rect x="870.5" y="822.5" width="1.7" height="1.7"/><rect x="867.5" y="825.5" width="1.7" height="1.7"/><rect x="870.5" y="825.5" width="1.7" height="1.7"/><rect x="864.5" y="828.5" width="1.7" height="1.7"/><rect x="867.5" y="828.5" width="1.7" height="1.7"/><rect x="870.5" y="828.5" width="1.7" height="1.7"/></g></svg>
<!--/STATUS-->
</body></html>
